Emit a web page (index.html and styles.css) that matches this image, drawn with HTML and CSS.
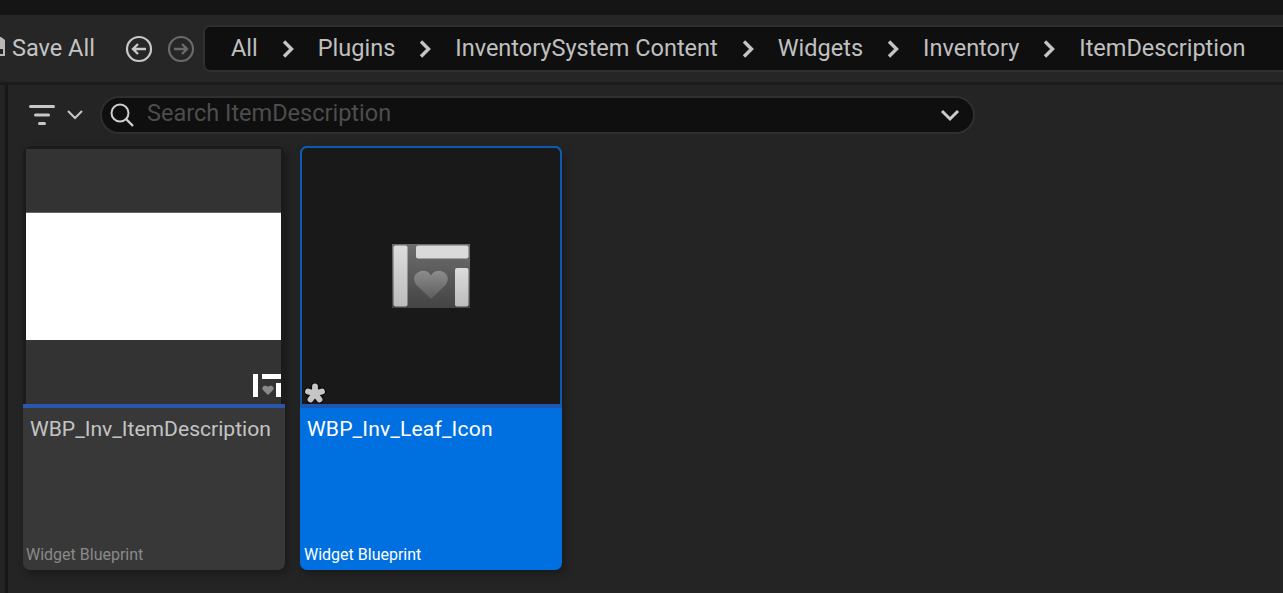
FILE: index.html
```html
<!DOCTYPE html>
<html lang="en">
<head>
  <meta charset="UTF-8">
  <title>Content Browser</title>
  <link rel="stylesheet" href="styles.css">
</head>
<body>
  <div class="topstrip"></div>

  <div class="toolbar">
    <div class="save-all">
      <svg class="save-icon" width="5" height="24" viewBox="0 0 5 24"><path d="M0 1h1l4 3v16H0z" fill="#b8b8b8"/><path d="M0 13h3v5H0z" fill="#242424"/></svg>
      <span>Save All</span>
    </div>
    <div class="nav-buttons">
      <svg width="28" height="28" viewBox="0 0 28 28"><circle cx="14" cy="14" r="12" fill="none" stroke="#c8c8c8" stroke-width="2.2"/><path d="M21 14H8M13 9l-5 5 5 5" fill="none" stroke="#c8c8c8" stroke-width="2.4"/></svg>
      <svg width="28" height="28" viewBox="0 0 28 28"><circle cx="14" cy="14" r="12" fill="none" stroke="#6a6a6a" stroke-width="2.2"/><path d="M7 14h13M15 9l5 5-5 5" fill="none" stroke="#6a6a6a" stroke-width="2.4"/></svg>
    </div>
    <div class="breadcrumbs">
      <span class="crumb">All</span>
      <svg class="sep" width="14" height="18" viewBox="0 0 14 18"><path d="M3 1.500l7.500 7.500-7.500 7.500" fill="none" stroke="#c4c4c4" stroke-width="3.400"/></svg>
      <span class="crumb">Plugins</span>
      <svg class="sep" width="14" height="18" viewBox="0 0 14 18"><path d="M3 1.500l7.500 7.500-7.500 7.500" fill="none" stroke="#c4c4c4" stroke-width="3.400"/></svg>
      <span class="crumb">InventorySystem Content</span>
      <svg class="sep" width="14" height="18" viewBox="0 0 14 18"><path d="M3 1.500l7.500 7.500-7.500 7.500" fill="none" stroke="#c4c4c4" stroke-width="3.400"/></svg>
      <span class="crumb">Widgets</span>
      <svg class="sep" width="14" height="18" viewBox="0 0 14 18"><path d="M3 1.500l7.500 7.500-7.500 7.500" fill="none" stroke="#c4c4c4" stroke-width="3.400"/></svg>
      <span class="crumb">Inventory</span>
      <svg class="sep" width="14" height="18" viewBox="0 0 14 18"><path d="M3 1.500l7.500 7.500-7.500 7.500" fill="none" stroke="#c4c4c4" stroke-width="3.400"/></svg>
      <span class="crumb">ItemDescription</span>
    </div>
  </div>

  <div class="main">
    <div class="side-line"></div>
    <div class="content">
      <div class="search-row">
        <div class="filter">
          <svg width="26" height="22" viewBox="0 0 26 22"><path d="M1.500 2.500h23M6.500 11h13M10.500 19.500h5" stroke="#c8c8c8" stroke-width="3" stroke-linecap="round" fill="none"/></svg>
          <svg width="18" height="12" viewBox="0 0 18 12"><path d="M2 2l7 7 7-7" fill="none" stroke="#c8c8c8" stroke-width="2"/></svg>
        </div>
        <div class="search">
          <svg width="26" height="26" viewBox="0 0 26 26"><circle cx="11" cy="11" r="8.500" fill="none" stroke="#cfcfcf" stroke-width="2"/><path d="M17 17l7 7" stroke="#cfcfcf" stroke-width="2.400"/></svg>
          <span class="search-text">Search ItemDescription</span>
          <svg class="search-arrow" width="20" height="14" viewBox="0 0 20 14"><path d="M2 3l8 8 8-8" fill="none" stroke="#cccccc" stroke-width="3"/></svg>
        </div>
      </div>

      <div class="cards">
        <div class="card">
          <div class="thumb">
            <div class="preview"></div>
            <svg class="badge-widget" width="28" height="24" viewBox="0 0 28 24">
              <path d="M0 0h5v23H0zM9 0h19v5H9zM23 9h5v14h-5z" fill="#ffffff"/>
              <path d="M15 21l-5-5c-2.500-3.500 3-6 5-3 2-3 7.500-.5 5 3z" fill="#8a8a8a"/>
            </svg>
          </div>
          <div class="card-bar"></div>
          <div class="card-info">
            <div class="card-name">WBP_Inv_ItemDescription</div>
            <div class="card-type">Widget Blueprint</div>
          </div>
        </div>

        <div class="card selected">
          <div class="thumb">
            <svg class="big-icon" width="78" height="64" viewBox="0 0 78 64">
              <defs>
                <linearGradient id="bgGrad" x1="0" y1="0" x2="0" y2="1"><stop offset="0" stop-color="#6e6e6e"/><stop offset="1" stop-color="#444444"/></linearGradient>
                <linearGradient id="heartGrad" x1="0" y1="0" x2="0" y2="1"><stop offset="0" stop-color="#8c8c8c"/><stop offset="1" stop-color="#5e5e5e"/></linearGradient>
                <linearGradient id="barGrad" x1="0" y1="0" x2="0" y2="1"><stop offset="0" stop-color="#dcdcdc"/><stop offset="1" stop-color="#bcbcbc"/></linearGradient>
              </defs>
              <rect width="78" height="64" fill="url(#bgGrad)"/>
              <rect x="1.500" y="1.500" width="14" height="61" rx="2" fill="url(#barGrad)"/>
              <rect x="24" y="1.500" width="52.500" height="13" rx="2" fill="#dadada"/>
              <rect x="63" y="24" width="13.500" height="38.500" rx="2" fill="url(#barGrad)"/>
              <path d="M39 55L24.500 41C16 30 33 21 39 31.500 45 21 62 30 53.500 41z" fill="url(#heartGrad)"/>
            </svg>
            <svg class="badge-star" width="26" height="24" viewBox="0 0 26 24">
              <defs><filter id="soft" filterUnits="userSpaceOnUse" x="0" y="0" width="26" height="24"><feGaussianBlur stdDeviation="0.600"/></filter></defs>
              <path d="M13 13.500V6.500M13 13.500L6 11.500M13 13.500L20 11.500M13 13.500L8.500 19.500M13 13.500L17.500 19.500" fill="none" stroke="#101010" stroke-width="8.500" stroke-linecap="round" filter="url(#soft)"/>
              <path d="M13 13.500V6.500M13 13.500L6 11.500M13 13.500L20 11.500M13 13.500L8.500 19.500M13 13.500L17.500 19.500" fill="none" stroke="#c6c6c6" stroke-width="5.800" stroke-linecap="round" filter="url(#soft)"/>
            </svg>
          </div>
          <div class="card-bar"></div>
          <div class="card-info">
            <div class="card-name">WBP_Inv_Leaf_Icon</div>
            <div class="card-type">Widget Blueprint</div>
          </div>
        </div>
      </div>
    </div>
  </div>
</body>
</html>
```

FILE: styles.css
```css
html, body {
  margin: 0;
  height: 593px;
  overflow: hidden;
}

body {
  font-family: 'Roboto', 'Liberation Sans', sans-serif;
  background-color: #242424;
  color: #c4c4c4;
}

.topstrip {
  height: 15px;
  background: #151515;
}

.toolbar {
  height: 67px;
  display: flex;
  align-items: center;
  background: #262626;
  border-bottom: 3px solid #1b1b1b;
  overflow: hidden;
}

.save-all {
  display: flex;
  align-items: center;
  gap: 7px;
  width: 125px;
  padding-bottom: 2px;
  font-size: 23.500px;
  color: #c4c4c4;
  flex-shrink: 0;
}

.nav-buttons {
  display: flex;
  gap: 14px;
  width: 78px;
  flex-shrink: 0;
  margin-top: 1px;
}

.breadcrumbs {
  flex: 1;
  height: 47px;
  box-sizing: border-box;
  display: flex;
  align-items: center;
  padding-left: 26px;
  margin-right: -10px;
  margin-top: -1px;
  background: #0f0f0f;
  border: 2px solid #2f2f2f;
  border-radius: 7px 0 0 7px;
  white-space: nowrap;
}

.crumb {
  font-size: 23.500px;
  color: #c0c0c0;
}

.sep {
  margin: 2px 23px 0 23px;
  flex-shrink: 0;
}

.main {
  display: flex;
  height: 508px;
}

.side-line {
  width: 3px;
  margin-left: 5px;
  background: #171717;
}

.content {
  flex: 1;
  padding: 11px 15px 0 15px;
}

.search-row {
  display: flex;
  align-items: center;
  height: 38px;
}

.filter {
  display: flex;
  align-items: center;
  gap: 11px;
  width: 77px;
  padding-left: 6px;
  box-sizing: border-box;
}

.search {
  width: 875px;
  height: 38px;
  box-sizing: border-box;
  display: flex;
  align-items: center;
  gap: 12px;
  padding: 0 13px 0 7px;
  background: #0f0f0f;
  border: 2px solid #2f2f2f;
  border-radius: 19px;
}

.search-text {
  flex: 1;
  font-size: 23.500px;
  color: #4d4d4d;
  margin-top: -4px;
}

.cards {
  display: flex;
  gap: 15px;
  margin-top: 12px;
}

.card {
  width: 262px;
  height: 424px;
  display: flex;
  flex-direction: column;
  background: #383838;
  border-radius: 7px;
  box-shadow: 3px 4px 8px rgba(0,0,0,0.3);
  overflow: hidden;
}

.thumb {
  position: relative;
  height: 258px;
  box-sizing: border-box;
  background: #333333;
  border: 3px solid #1b1b1b;
  border-bottom: none;
  border-right-width: 4px;
  display: flex;
  align-items: center;
  justify-content: center;
}

.preview {
  width: 100%;
  height: 128px;
  background: #ffffff;
  border-top: 1px solid #666;
  margin-bottom: 2px;
  box-sizing: border-box;
}

.badge-widget {
  position: absolute;
  right: 0;
  bottom: 6px;
}

.card-bar {
  height: 4px;
  background: #2a57ac;
}

.card-info {
  flex: 1;
  position: relative;
  padding: 9px 7px;
}

.card-name {
  font-size: 21.100px;
  color: #c4c4c4;
  line-height: 24px;
}

.card-type {
  position: absolute;
  left: 3px;
  bottom: 6px;
  font-size: 16px;
  color: #8a8a8a;
}

.selected {
  background: #0070e0;
}

.selected .thumb {
  background: #191919;
  border: 2px solid #0f5ab0;
  border-bottom: none;
  border-radius: 7px 7px 0 0;
  padding-bottom: 3px;
}

.selected .card-bar {
  background: #1f57ad;
}

.selected .card-name,
.selected .card-type {
  color: #ffffff;
}

.selected .card-name {
  letter-spacing: 0.150px;
}

.selected .card-type {
  left: 4px;
}

.big-icon {
  margin-top: 3px;
}

.badge-star {
  position: absolute;
  left: 0;
  bottom: 0;
}
```
